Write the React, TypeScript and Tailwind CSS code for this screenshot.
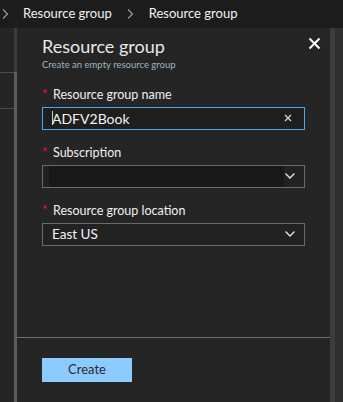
import React from "react";

const font = { fontFamily: 'Lato, "Open Sans", sans-serif' };

function Chevron({ className = "" }: { className?: string }) {
  return (
    <svg width="12" height="8" viewBox="0 0 12 8" className={className}>
      <path d="M1.5 1.5 L6 6 L10.5 1.5" fill="none" stroke="#e6e6e6" strokeWidth="1.3" />
    </svg>
  );
}

function Label({ text }: { text: string }) {
  return (
    <div className="flex items-center h-[16px] text-[12.5px] text-[#f0f0f0] leading-none">
      <span className="text-[#e81123] w-[11px] text-[13px] relative top-[-1px]">*</span>
      <span>{text}</span>
    </div>
  );
}

export default function App() {
  return (
    <div className="w-[343px] h-[402px] bg-[#252525] flex flex-col overflow-hidden" style={font}>
      <div className="h-[28px] bg-[#1c1c1c] flex items-center text-[13px] text-[#f2f2f2] shrink-0">
        <svg width="8" height="12" viewBox="0 0 8 12" className="ml-[2px] mr-[13px]">
          <path d="M1 1.5 L5.5 6 L1 10.5" fill="none" stroke="#9a9a9a" strokeWidth="1.2" />
        </svg>
        <span>Resource group</span>
        <svg width="8" height="12" viewBox="0 0 8 12" className="ml-[15px] mr-[14px]">
          <path d="M1 1.5 L5.5 6 L1 10.5" fill="none" stroke="#9a9a9a" strokeWidth="1.2" />
        </svg>
        <span>Resource group</span>
      </div>
      <div className="flex flex-1">
        <div className="w-[14px] flex flex-col">
          <div className="h-[44px]" />
          <div className="h-[1px] bg-[#4a4a4a]" />
          <div className="h-[35px]" />
          <div className="h-[1px] bg-[#4a4a4a]" />
        </div>
        <div className="w-[3px] flex flex-col">
          <div className="h-[44px] bg-[#3b3b3b]" />
          <div className="flex-1 bg-[#5c5c5c]" />
        </div>
        <div className="w-[313px] flex flex-col">
          <div className="h-[309px] pl-[25px] pr-[10px] relative">
            <div className="text-[18px] text-[#e8e8e8] leading-none mt-[9px]">Resource group</div>
            <div className="text-[9.5px] text-[#9fb3c1] leading-none mt-[5px]">Create an empty resource group</div>
            <svg width="13" height="13" viewBox="0 0 13 13" className="absolute top-[9px] left-[291px]">
              <path d="M1.5 1.5 L11.5 11.5 M11.5 1.5 L1.5 11.5" stroke="#ffffff" strokeWidth="2" />
            </svg>

            <div className="mt-[18px]">
              <Label text="Resource group name" />
              <div className="mt-[3px] w-[263px] h-[23px] border border-[#4fa6e8] bg-[#1e1e1e] flex items-center pl-[9px] pr-[12px]">
                <div className="w-[1px] h-[14px] bg-[#cccccc]" />
                <span className="text-[14px] text-[#f2f2f2] flex-1 ml-[-1px]">ADFV2Book</span>
                <svg width="8" height="8" viewBox="0 0 8 8">
                  <path d="M1 1 L7 7 M7 1 L1 7" stroke="#d8d8d8" strokeWidth="1.2" />
                </svg>
              </div>
            </div>

            <div className="mt-[16px]">
              <Label text="Subscription" />
              <div className="mt-[3px] w-[263px] h-[23px] border border-[#6b6b6b] bg-[#222222] flex items-center pl-[6px] pr-[8px]">
                <div className="w-[237px] h-[21px] bg-[#181818]" />
                <div className="flex-1" />
                <Chevron />
              </div>
            </div>

            <div className="mt-[16px]">
              <Label text="Resource group location" />
              <div className="mt-[3px] w-[263px] h-[23px] border border-[#6b6b6b] bg-[#222222] flex items-center pl-[9px] pr-[8px]">
                <span className="text-[13.5px] text-[#f2f2f2] flex-1">East US</span>
                <Chevron />
              </div>
            </div>
          </div>
          <div className="h-[1px] bg-[#6e6e6e]" />
          <div className="pl-[25px] pt-[20px]">
            <div className="w-[90px] h-[24px] bg-[#8ccbff] flex items-center justify-center text-[13px] text-[#2b2b2b]">
              Create
            </div>
          </div>
        </div>
        <div className="w-[5px] bg-[#3c3c3c]" />
        <div className="w-[8px] bg-[#2f2f2f]" />
      </div>
    </div>
  );
}
